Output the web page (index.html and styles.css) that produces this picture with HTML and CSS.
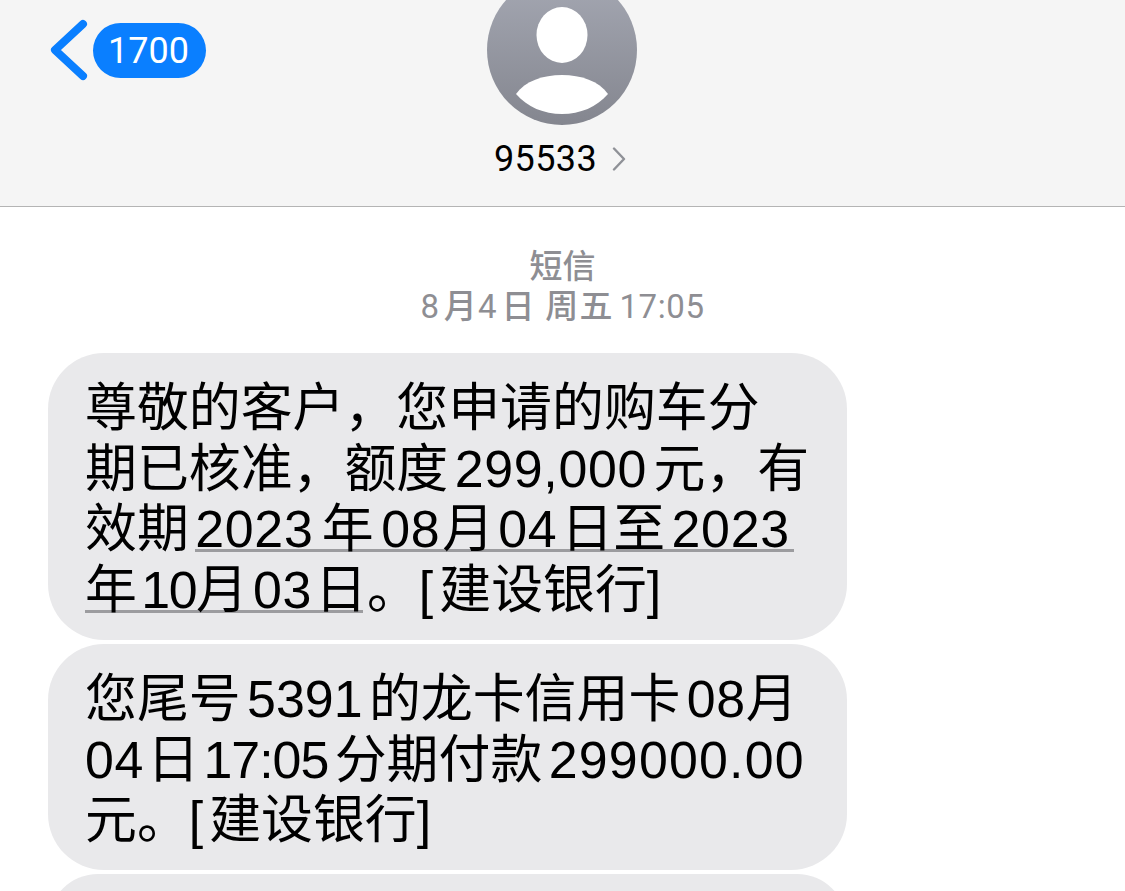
FILE: index.html
```html
<!DOCTYPE html>
<html lang="zh-CN">
<head>
<meta charset="utf-8">
<title>95533</title>
<link rel="stylesheet" href="styles.css">
</head>
<body>
<div class="screen">
  <header class="nav">
    <div class="nav-left">
      <svg class="back" viewBox="0 0 40 64" width="40" height="64" aria-hidden="true"><path d="M34 6 L6 32 L34 58"/></svg>
      <span class="badge">1700</span>
    </div>
    <div class="contact">
      <svg class="avatar" viewBox="0 0 150 150" width="150" height="150" aria-hidden="true">
        <defs><linearGradient id="av" x1="0" y1="0" x2="0" y2="1"><stop offset="0" stop-color="#a5a8b3"/><stop offset="1" stop-color="#84868f"/></linearGradient></defs>
        <circle cx="75" cy="75" r="75" fill="url(#av)"/>
        <ellipse cx="75" cy="60" rx="25.5" ry="28" fill="#fff"/>
        <path d="M29 119 C38 106 56 100 75 100 C94 100 112 106 121 119 C110 132 93 139 75 139 C57 139 40 132 29 119 Z" fill="#fff"/>
      </svg>
      <div class="name">
        <span>95533</span>
        <svg class="more" viewBox="0 0 14 24" width="14" height="24" aria-hidden="true"><path d="M2 1.5 L12 12 L2 22.5"/></svg>
      </div>
    </div>
    <div></div>
  </header>
  <main class="thread">
    <div class="stamp">
      <div class="service">短信</div>
      <div class="time"><span class="digit">8</span><span class="han">月</span><span class="digit">4</span><span class="han">日 周五</span> <span class="clock">17:05</span></div>
    </div>
    <div class="bubbles">
      <div class="bubble">
        <div class="line">尊敬的客户，您申请的购车分</div>
        <div class="line">期已核准，额度 <span class="num">299,000</span> 元，有</div>
        <div class="line">效期 <span class="link link-long"><span class="num gap-r">2023</span> 年 <span class="num gap-s">08</span>月<span class="num gap">04</span>日至 <span class="num">2023</span></span></div>
        <div class="line"><span class="link link-short">年 <span class="ten">10</span>月<span class="num gap-m">03</span>日</span>。<span class="open">[</span>建设银行]</div>
      </div>
      <div class="bubble">
        <div class="line">您尾号 5391 的龙卡信用卡 <span class="num">08</span>月</div>
        <div class="line"><span class="num gap-end">04</span>日 <span class="clock-inline">17:05</span> 分期付款 <span class="num-wide">299000.00</span></div>
        <div class="line">元。<span class="open">[</span>建设银行]</div>
      </div>
      <div class="bubble"></div>
    </div>
  </main>
</div>
</body>
</html>
```
FILE: styles.css
```css
* { box-sizing: border-box; }
html, body { margin: 0; padding: 0; background: #fff; }
.screen {
  width: 1125px;
  height: 891px;
  overflow: hidden;
  font-family: "Liberation Sans", "Noto Sans CJK SC", sans-serif;
  color: #000;
}
.nav {
  height: 207px;
  background: #f5f5f5;
  border-bottom: 1px solid #b4b4b4;
  display: grid;
  grid-template-columns: 1fr 150px 1fr;
  overflow: hidden;
}
.nav-left {
  display: flex;
  align-items: center;
  padding: 18px 0 0 49px;
  align-self: start;
}
.back { fill: none; stroke: #0a7fff; stroke-width: 8; stroke-linecap: round; stroke-linejoin: round; }
.badge {
  width: 113px;
  height: 55px;
  border-radius: 28px;
  background: #0a7fff;
  color: #fff;
  font-family: Roboto, sans-serif;
  font-weight: 400;
  font-size: 36px;
  line-height: 57px;
  text-align: center;
  padding-right: 2px;
  margin-left: 4px;
}
.contact {
  display: flex;
  flex-direction: column;
  align-items: center;
  margin-left: -1px;
}
.avatar { display: block; margin-top: -25px; flex: none; }
.name {
  display: flex;
  align-items: center;
  gap: 15px;
  margin-top: 13px;
  padding-right: 4px;
  font-family: Roboto, sans-serif;
  font-size: 36px;
  line-height: 42px;
  letter-spacing: 0.4px;
  white-space: nowrap;
}
.more { fill: none; stroke: #8f9197; stroke-width: 2.4; stroke-linecap: round; stroke-linejoin: round; }
.thread { padding: 40px 0 0 48px; }
.stamp {
  width: 1029px;
  text-align: center;
  color: #8e8e93;
  font-size: 33px;
  line-height: 40px;
  height: 106px;
  white-space: nowrap;
}
.service { font-weight: 500; }
.time { letter-spacing: 1.3px; font-family: Roboto, "Noto Sans CJK SC", sans-serif; }
.digit { margin-right: 3.5px; }
.han { font-weight: 500; }
.clock { letter-spacing: 0.6px; margin-left: -4px; }
.bubbles { display: flex; flex-direction: column; gap: 4px; width: 799px; }
.bubble {
  background: #e9e9eb;
  border-radius: 56px;
  padding: 25px 37px 19.2px;
  min-height: 100px;
  font-size: 51.9px;
  line-height: 60.7px;
  word-spacing: -8px;
}
.line { white-space: nowrap; }
.num { letter-spacing: 0.7px; }
.num-wide { letter-spacing: 1.2px; }
.gap { margin: 0 4px; }
.gap-r { margin-right: 2px; }
.gap-s { margin: 0 2px 0 1px; }
.gap-m { margin: 0 3px 0 5px; }
.gap-end { margin-right: 3px; }
.ten { letter-spacing: -1.5px; margin-left: -2px; }
.clock-inline { letter-spacing: -1px; margin-left: -2px; }
.open { margin-right: 6px; }
.link {
  background-image: linear-gradient(#9c9c9f, #9c9c9f);
  background-repeat: no-repeat;
  background-size: 100% 3px;
  background-position: 0 calc(100% - 6px);
}
.link-long { padding-right: 4px; }
.link-short { background-size: calc(100% - 4px) 3px; }
```
